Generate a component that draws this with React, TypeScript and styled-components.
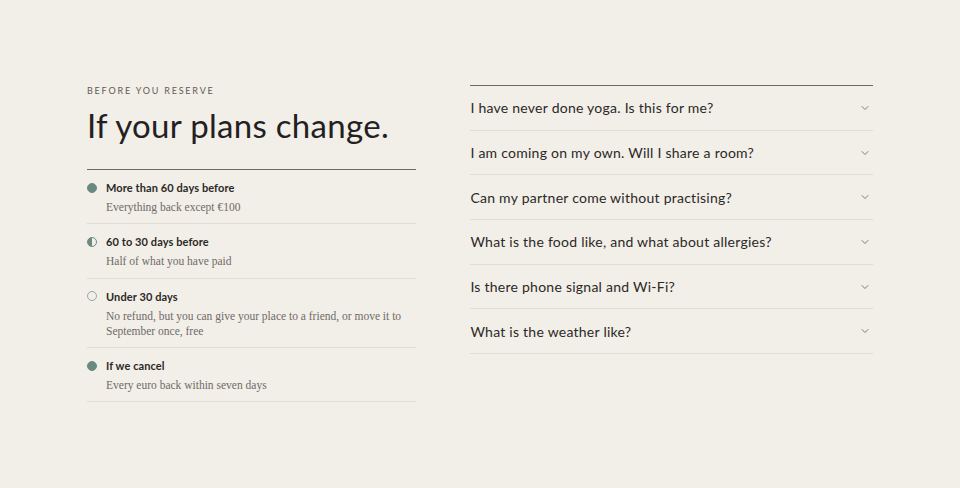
import React from 'react';
import styled, { createGlobalStyle } from 'styled-components';
import { ChevronDown } from 'lucide-react';

const GlobalStyle = createGlobalStyle`
  html, body {
    margin: 0;
    padding: 0;
    background: #f2eee8;
  }
  body {
    font-family: 'Lato', 'Noto Sans', sans-serif;
    color: #2b2926;
  }
`;

type Dot = 'full' | 'half' | 'empty';

interface Term {
  dot: Dot;
  title: string;
  text: string;
}

const terms: Term[] = [
  { dot: 'full', title: 'More than 60 days before', text: 'Everything back except €100' },
  { dot: 'half', title: '60 to 30 days before', text: 'Half of what you have paid' },
  {
    dot: 'empty',
    title: 'Under 30 days',
    text: 'No refund, but you can give your place to a friend, or move it to September once, free',
  },
  { dot: 'full', title: 'If we cancel', text: 'Every euro back within seven days' },
];

const questions = [
  'I have never done yoga. Is this for me?',
  'I am coming on my own. Will I share a room?',
  'Can my partner come without practising?',
  'What is the food like, and what about allergies?',
  'Is there phone signal and Wi-Fi?',
  'What is the weather like?',
];

const App: React.FC = () => {
  return (
    <>
      <GlobalStyle />
      <Page>
        <Section>
          <Policy>
            <Eyebrow>Before you reserve</Eyebrow>
            <Heading>If your plans change.</Heading>
            <TermList>
              {terms.map((term) => (
                <TermRow key={term.title}>
                  <Marker $dot={term.dot} />
                  <TermBody>
                    <TermTitle>{term.title}</TermTitle>
                    <TermText>{term.text}</TermText>
                  </TermBody>
                </TermRow>
              ))}
            </TermList>
          </Policy>
          <Faq>
            {questions.map((q) => (
              <Question key={q}>
                <QuestionText>{q}</QuestionText>
                <ChevronDown size={12} strokeWidth={1.5} color="#5a5651" />
              </Question>
            ))}
          </Faq>
        </Section>
      </Page>
    </>
  );
};

export default App;

const Page = styled.main`
  min-height: 488px;
  padding-top: 85px;
  box-sizing: border-box;
`;

const Section = styled.div`
  width: 786px;
  margin: 0 auto;
  display: grid;
  grid-template-columns: 45fr 55fr;
  column-gap: 54px;
  align-items: start;
`;

const Policy = styled.div`
  display: flex;
  flex-direction: column;
`;

const Eyebrow = styled.div`
  font-size: 9px;
  letter-spacing: 1.8px;
  text-transform: uppercase;
  color: #5f5b56;
  line-height: 11px;
`;

const Heading = styled.h2`
  margin: 6px 0 0;
  font-size: 33px;
  font-weight: 400;
  line-height: 46px;
  letter-spacing: 0.3px;
  color: #23211f;
  padding-bottom: 21px;
  border-bottom: 1px solid #6e6a65;
`;

const TermList = styled.ul`
  list-style: none;
  margin: 0;
  padding: 0;
`;

const TermRow = styled.li`
  display: flex;
  gap: 9px;
  align-items: flex-start;
  padding: 10px 0 8px;
  border-bottom: 1px solid #e2dcd4;
`;

const Marker = styled.span<{ $dot: Dot }>`
  flex: none;
  width: 10px;
  height: 10px;
  margin-top: 2.5px;
  border-radius: 50%;
  box-sizing: border-box;
  border: 1px solid ${({ $dot }) => ($dot === 'empty' ? '#9aa8a2' : '#6a8a80')};
  background: ${({ $dot }) =>
    $dot === 'full'
      ? '#6a8a80'
      : $dot === 'half'
      ? 'linear-gradient(90deg, #6a8a80 50%, transparent 50%)'
      : 'transparent'};
`;

const TermBody = styled.div`
  display: flex;
  flex-direction: column;
  gap: 5px;
`;

const TermTitle = styled.div`
  font-size: 11px;
  font-weight: 700;
  letter-spacing: 0.1px;
  line-height: 15px;
  color: #2b2926;
`;

const TermText = styled.p`
  margin: 0;
  font-family: 'Liberation Serif', 'DejaVu Serif', serif;
  font-size: 11.5px;
  line-height: 15.25px;
  color: #6f6b66;
  max-width: 310px;
`;

const Faq = styled.div`
  border-top: 1px solid #6e6a65;
`;

const Question = styled.div`
  display: flex;
  align-items: center;
  justify-content: space-between;
  height: 43.7px;
  padding-right: 2px;
  border-bottom: 1px solid #e2dcd4;
`;

const QuestionText = styled.span`
  font-size: 14px;
  letter-spacing: 0.25px;
  color: #2b2926;
`;
